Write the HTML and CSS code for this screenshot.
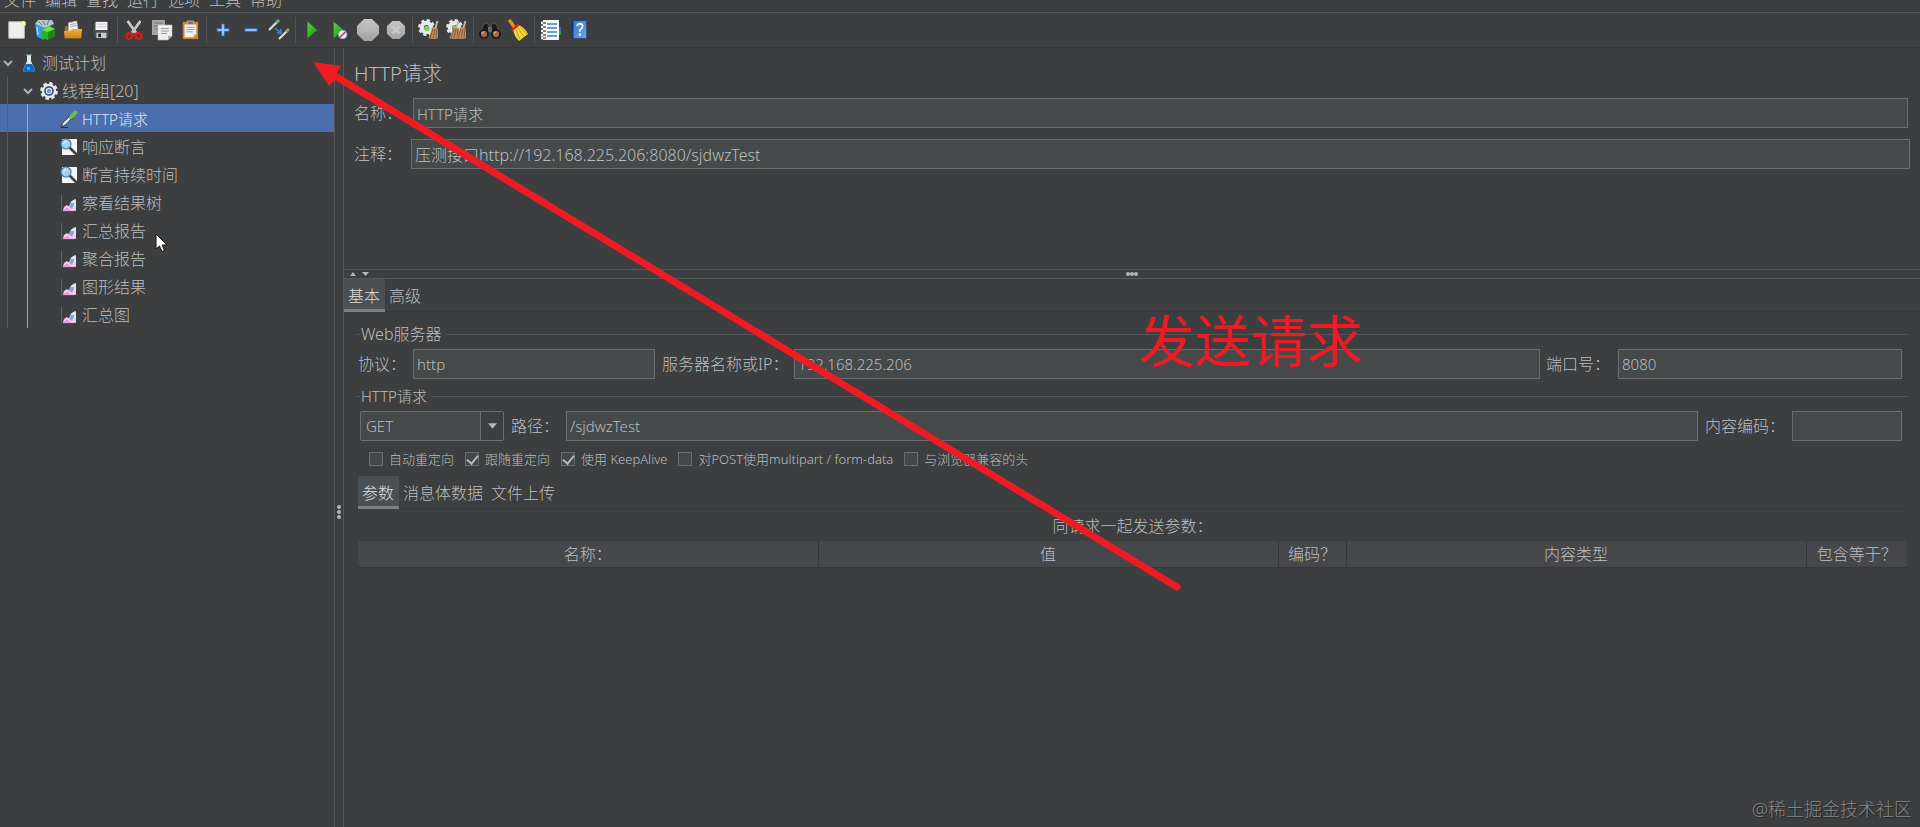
FILE: index.html
```html
<!DOCTYPE html>
<html lang="zh-CN">
<head>
<meta charset="utf-8">
<title>HTTP请求</title>
<link rel="stylesheet" href="styles.css">
</head>
<body>
<svg class="defs" aria-hidden="true">
  <defs>
    <linearGradient id="gGreen" x1="0" y1="0" x2="1" y2="1"><stop offset="0" stop-color="#5fd03f"/><stop offset="1" stop-color="#0c9a0c"/></linearGradient>
    <linearGradient id="gFolder" x1="0" y1="0" x2="0" y2="1"><stop offset="0" stop-color="#f0b040"/><stop offset="1" stop-color="#c98512"/></linearGradient>
    <linearGradient id="gGrey" x1="0" y1="0" x2="0" y2="1"><stop offset="0" stop-color="#c4c4c4"/><stop offset="1" stop-color="#a2a2a2"/></linearGradient>
    <linearGradient id="gBook" x1="0" y1="0" x2="1" y2="1"><stop offset="0" stop-color="#3c78c8"/><stop offset="1" stop-color="#6ea6ee"/></linearGradient>
    <symbol id="gear" viewBox="0 0 16 16">
      <circle cx="8" cy="8" r="6.600" fill="none" stroke="#e6e8ea" stroke-width="2.600" stroke-dasharray="3 2.184"/>
      <circle cx="8" cy="8" r="4.400" fill="none" stroke="#e6e8ea" stroke-width="4"/>
    </symbol>
    <symbol id="pipette" viewBox="0 0 18 18">
      <path d="M1 17 L3 12.500 L10 6 L12 8 L5.500 15Z" fill="#dfe6e8" stroke="#222" stroke-width=".8"/>
      <path d="M9 5.500 L12.700 9" stroke="#173f12" stroke-width="2"/>
      <path d="M11 7 L15.500 2.500" stroke="#6cbb4c" stroke-width="4" stroke-linecap="round"/>
      <path d="M1 17.500h7" stroke="#222" stroke-width=".8"/>
    </symbol>
    <symbol id="assert" viewBox="0 0 18 18">
      <path d="M2 1h15v16h-15z" fill="#f5f5f5"/>
      <path d="M9.500 9.500 L17 17" stroke="#444" stroke-width="2.600"/>
      <circle cx="6" cy="6" r="5" fill="#9fd2f3" stroke="#4d7d9d" stroke-width="1.200"/>
      <path d="M3.500 6a3 3 0 0 1 3-2.500" stroke="#fff" fill="none"/>
    </symbol>
    <symbol id="chart" viewBox="0 0 18 18">
      <path d="M1.500 1v16h14" fill="none" stroke="#606263" stroke-width="1"/>
      <path d="M9 13 Q10 6 16 5 V17 H11Z" fill="#dce4fa"/>
      <path d="M11 9 Q9 12 11 15 Q14 13 14 9Z" fill="#8e9ddb"/>
      <path d="M3 17 Q3 12 7 11 Q10 12 11 15 L16 14 V17Z" fill="#ee9edb"/>
      <path d="M4 15 Q6 12 8 13 L12 16 L16 15" stroke="#fff" fill="none" stroke-width=".9"/>
    </symbol>
    <symbol id="handbroom" viewBox="0 0 12 20">
      <path d="M10.500 1 L8.500 8" stroke="#c8b49a" stroke-width="2"/>
      <path d="M5 7 L11 8.500 L11 18 Q7 20 1 18 Q4 14 5 7Z" fill="#bb8d66"/>
      <path d="M6 9 L3 18M8 9L6 18M10 9L9 18" stroke="#765136" stroke-width=".8"/>
    </symbol>
  </defs>
</svg>

<nav class="menubar">
  <button>文件</button><button>编辑</button><button>查找</button><button>运行</button><button>选项</button><button>工具</button><button>帮助</button>
</nav>

<div class="toolbar" role="toolbar">
  <button aria-label="新建"><svg viewBox="0 0 22 22"><path d="M2 2h17v18h-17z" fill="#eee" stroke="#cfcfc5"/><circle cx="18" cy="4" r="2.800" fill="#f2f07a"/><circle cx="18" cy="4" r="1.200" fill="#fff"/></svg></button>
  <button class="big" aria-label="模板"><svg viewBox="0 0 22 22"><path d="M1 5 L10 8 V21 L3 18Z" fill="#2d9ddf"/><path d="M3 8l1 8" stroke="#9cdcfa" stroke-width="1.500"/><path d="M1 5 L4 1 H18 L20 5 L11 9Z" fill="#b4c9d1"/><path d="M4 2l4 4M9 2l2 4M15 1l-2 5" stroke="#5c7c8a"/><path d="M8 11 L15 7 L21 10 V17 L13 21 L8 18Z" fill="#2db51c"/><path d="M8 11 L14 13 L21 10 L15 7Z" fill="#72df4c"/><path d="M14 13 L21 10 V17 L14 21Z" fill="#168d12"/></svg></button>
  <button aria-label="打开"><svg viewBox="0 0 22 22"><path d="M2 7h5l2 3h11v10H2z" fill="#a96e10"/><path d="M6 3 L15 1 L17 12 H6Z" fill="#f2f2f2" stroke="#aaa" stroke-width=".6"/><path d="M8 5l6-1M8 7l7-1" stroke="#888" stroke-width=".8"/><path d="M1 12H8L10 10H21L20 20H2Z" fill="url(#gFolder)"/></svg></button>
  <button aria-label="保存"><svg viewBox="0 0 22 22"><path d="M2 2H20V20H4L2 18Z" fill="#4b4d51" stroke="#292a2c"/><path d="M5 2h13v9H5z" fill="#fafafa"/><path d="M6 4.500h11M6 7.500h11" stroke="#b9bdc4"/><path d="M6 14h11v6H6z" fill="#c7cbd0"/><path d="M8 15h3v4H8z" fill="#222"/></svg></button>
  <span class="sep"></span>
  <button aria-label="剪切"><svg viewBox="0 0 22 22"><path d="M4 1 L14 15M18 1 L8 15" stroke="#dedede" stroke-width="2.800"/><path d="M5 2 L14 15M17 2 L8 15" stroke="#909090" stroke-width=".7"/><ellipse cx="6" cy="17.500" rx="3.500" ry="3" fill="none" stroke="#e01818" stroke-width="2.600" transform="rotate(-35 6 17.500)"/><ellipse cx="16" cy="17.500" rx="3.500" ry="3" fill="none" stroke="#e01818" stroke-width="2.600" transform="rotate(35 16 17.500)"/></svg></button>
  <button class="big" aria-label="复制"><svg viewBox="0 0 22 22"><path d="M1 1h13v15H1z" fill="#a5a5a5"/><path d="M3 4h9M3 7h9M3 10h6" stroke="#777"/><path d="M7 6h14v11l-4 4H7z" fill="#efefef" stroke="#bbb" stroke-width=".6"/><path d="M10 9.500h8M10 12h8M10 14.500h6" stroke="#999"/><path d="M21 17h-4v4z" fill="#aaa"/></svg></button>
  <button aria-label="粘贴"><svg viewBox="0 0 22 22"><path d="M3 2h17v19H3z" fill="#cb8629"/><path d="M5 5h13v11l-3 3H5z" fill="#f0f0f0"/><path d="M8 1h7v4H8z" fill="#77797c" stroke="#ccc" stroke-width=".7"/><path d="M7 8h9M7 10.500h9M7 13h7" stroke="#999"/><path d="M18 16h-3v3z" fill="#aaa"/></svg></button>
  <span class="sep"></span>
  <button aria-label="全部展开"><svg viewBox="0 0 22 22"><path d="M11 4v14M4 11h14" stroke="#3979d9" stroke-width="3.800"/><path d="M11 5v12M5 11h12" stroke="#a9d2ff" stroke-width="1.800"/></svg></button>
  <button aria-label="全部折叠"><svg viewBox="0 0 22 22"><path d="M4 11h14" stroke="#3979d9" stroke-width="3.800"/><path d="M5 11h12" stroke="#a9d2ff" stroke-width="1.800"/></svg></button>
  <button class="big" aria-label="切换"><svg viewBox="0 0 22 22"><path d="M1 11L9 3M11 20L19 12" stroke="#d9dfd9" stroke-width="2.200"/><path d="M8 4l3-3M18 13l3-3" stroke="#79ad61" stroke-width="3"/><path d="M7 9l6 5M13 10v4H9" stroke="#3989da" stroke-width="1.600" fill="none"/></svg></button>
  <span class="sep"></span>
  <button aria-label="启动"><svg viewBox="0 0 22 22"><path d="M6 2 L17 11 L6 20Z" fill="url(#gGreen)"/></svg></button>
  <button aria-label="不停顿开始"><svg viewBox="0 0 22 22"><path d="M4 2 L15 11 L4 20Z" fill="url(#gGreen)"/><circle cx="14" cy="16" r="4.500" fill="#e9edf6" stroke="#8eaedb"/><path d="M11 19L17 13" stroke="#d63a3a" stroke-width="1.800"/></svg></button>
  <button class="big" aria-label="停止" disabled><svg viewBox="0 0 22 22"><path d="M7 0h8l7 7v8l-7 7H7l-7-7V7z" fill="url(#gGrey)"/><path d="M5 8h3v5H5zM10 8h3v5h-3zM15 13V8h3v3h-3" fill="none" stroke="#bcbcbc"/></svg></button>
  <button aria-label="关闭" disabled><svg viewBox="0 0 22 22"><path d="M7 1h8l6 6v8l-6 6H7l-6-6V7z" fill="url(#gGrey)"/><path d="M7 7l8 8M15 7l-8 8" stroke="#cacaca" stroke-width="2.500"/></svg></button>
  <span class="sep"></span>
  <button class="big" aria-label="清除"><svg viewBox="0 0 22 22"><use href="#gear" x="0" y="0" width="17" height="17"/><circle cx="9" cy="9.500" r="2.800" fill="#7fd25c"/><use href="#handbroom" x="9" y="1" width="12" height="20"/></svg></button>
  <button class="big" aria-label="清除全部"><svg viewBox="0 0 22 22"><use href="#gear" x="0" y="0" width="17" height="17"/><circle cx="8" cy="8" r="2" fill="#7fd25c"/><use href="#handbroom" x="2" y="1" width="12" height="20"/><use href="#handbroom" x="9" y="1" width="12" height="20"/></svg></button>
  <span class="sep"></span>
  <button class="big" aria-label="查找"><svg viewBox="0 0 22 22"><path d="M1 14 L5 5 Q8 3 10 6 V14ZM21 14L17 5Q14 3 12 6V14Z" fill="#1a1a1a" stroke="#666" stroke-width=".7"/><path d="M9 8h4v5H9z" fill="#666"/><circle cx="5" cy="15" r="4" fill="#9d6b4b" stroke="#151515" stroke-width="1.700"/><circle cx="17" cy="15" r="4" fill="#9d6b4b" stroke="#151515" stroke-width="1.700"/><path d="M3 15q0-2 2-2M15 15q0-2 2-2" stroke="#e0b69e" fill="none"/></svg></button>
  <button class="big" aria-label="重置查找"><svg viewBox="0 0 22 22"><path d="M3 2L8 9" stroke="#d99025" stroke-width="3.500" stroke-linecap="round"/><path d="M6 10L12 6Q18 9 21 15L12 22Q7 17 6 10Z" fill="#f5d63c"/><path d="M9 11L13 20M11 9L17 18M13 8L20 15" stroke="#c99b17"/><path d="M5 11L12 5.500" stroke="#d32a1c" stroke-width="2.500"/></svg></button>
  <span class="sep"></span>
  <button class="big" aria-label="函数助手"><svg viewBox="0 0 22 22"><path d="M3 1h16v20H3z" fill="#f6f8fb"/><path d="M7 5h10M7 9h10M7 13h10M7 17h10" stroke="#3f7fc5" stroke-width="1.300"/><path d="M1 4h4M1 8h4M1 12h4M1 16h4M1 19h4" stroke="#f6f8fb" stroke-width="2.400"/><path d="M3 4h3M3 8h3M3 12h3M3 16h3M3 19h3" stroke="#111" stroke-width="1.200"/><path d="M19 8h2v4h-2z" fill="#2a6fd6"/><path d="M19 12h2v4h-2z" fill="#29a829"/></svg></button>
  <button aria-label="帮助"><svg viewBox="0 0 22 22"><path d="M2 2L5 0H19V20H5L2 21Z" fill="#173d75"/><path d="M5 1h14v19H5z" fill="url(#gBook)"/><path d="M9 7q0-3 3-3t3 3q0 2-3 4v2" fill="none" stroke="#fff" stroke-width="1.800"/><circle cx="12" cy="16" r="1.300" fill="#fff"/></svg></button>
</div>

<main class="workspace">
  <aside class="tree">
    <ul role="tree">
      <li class="row root"><svg class="caret" viewBox="0 0 10 8"><path d="M1 2l4 4 4-4"/></svg><svg class="icon" viewBox="0 0 18 18"><path d="M7 1h4v6l4 9q0 2-2 2H5q-2 0-2-2l4-9z" fill="#dce8ef"/><path d="M6 10h6l3 6q0 2-2 2H5q-2 0-2-2z" fill="#1668bd"/><path d="M7 13h3v3H7z" fill="#45a7ed"/><path d="M6 1h6" stroke="#aaa"/></svg><span>测试计划</span></li>
      <li class="row group"><svg class="caret" viewBox="0 0 10 8"><path d="M1 2l4 4 4-4"/></svg><svg class="icon" viewBox="0 0 18 18"><use href="#gear" width="18" height="18"/><circle cx="9" cy="9" r="4" fill="#e9eef6" stroke="#26488d" stroke-width="1.600"/><circle cx="9" cy="9" r="2.200" fill="#7894cf"/></svg><span>线程组[20]</span></li>
      <li class="row leaf selected"><svg class="icon"><use href="#pipette"/></svg><span class="mixed">HTTP请求</span></li>
      <li class="row leaf"><svg class="icon"><use href="#assert"/></svg><span>响应断言</span></li>
      <li class="row leaf"><svg class="icon"><use href="#assert"/></svg><span>断言持续时间</span></li>
      <li class="row leaf"><svg class="icon"><use href="#chart"/></svg><span>察看结果树</span></li>
      <li class="row leaf"><svg class="icon"><use href="#chart"/></svg><span>汇总报告</span></li>
      <li class="row leaf"><svg class="icon"><use href="#chart"/></svg><span>聚合报告</span></li>
      <li class="row leaf"><svg class="icon"><use href="#chart"/></svg><span>图形结果</span></li>
      <li class="row leaf"><svg class="icon"><use href="#chart"/></svg><span>汇总图</span></li>
    </ul>
  </aside>
  <div class="vsplit"><i></i><i></i><i></i></div>

  <section class="editor">
    <div class="head">
      <h1>HTTP请求</h1>
      <div class="field name"><label for="name">名称：</label><input id="name" value="HTTP请求"></div>
      <div class="field note"><label for="note">注释：</label><input id="note" value="压测接口http://192.168.225.206:8080/sjdwzTest"></div>
    </div>
    <div class="hsplit"><svg viewBox="0 0 20 6"><path d="M0 5l3-4 3 4zM12 1h7l-3.500 4z"/></svg><span class="dots"><i></i><i></i><i></i></span></div>
    <div class="tabs"><button class="tab active">基本</button><button class="tab">高级</button></div>

    <div class="panel">
      <fieldset class="group-web">
        <legend>Web服务器</legend>
        <div class="line">
          <label class="l-proto" for="proto">协议：</label><input class="i-proto" id="proto" value="http">
          <label class="l-host" for="host">服务器名称或IP：</label><input class="i-host" id="host" value="192.168.225.206">
          <label class="l-port" for="port">端口号：</label><input class="i-port" id="port" value="8080">
        </div>
      </fieldset>
      <fieldset class="group-http">
        <legend>HTTP请求</legend>
        <div class="line">
          <div class="combo"><select aria-label="方法"><option>GET</option></select><span><svg viewBox="0 0 10 6"><path d="M0 0h10L5 6z"/></svg></span></div>
          <label class="l-path" for="path">路径：</label><input class="i-path" id="path" value="/sjdwzTest">
          <label class="l-enc" for="enc">内容编码：</label><input class="i-enc" id="enc">
        </div>
        <div class="checks">
          <label><input type="checkbox">自动重定向</label>
          <label><input type="checkbox" checked>跟随重定向</label>
          <label><input type="checkbox" checked>使用 KeepAlive</label>
          <label><input type="checkbox">对POST使用multipart / form-data</label>
          <label><input type="checkbox">与浏览器兼容的头</label>
        </div>
        <div class="tabs inner"><button class="tab active">参数</button><button class="tab">消息体数据</button><button class="tab">文件上传</button></div>
        <table>
          <caption>同请求一起发送参数：</caption>
          <colgroup><col><col><col class="c-enc"><col><col class="c-inc"></colgroup>
          <thead><tr><th>名称：</th><th>值</th><th>编码？</th><th>内容类型</th><th>包含等于？</th></tr></thead>
        </table>
      </fieldset>
    </div>
  </section>
</main>

<svg class="arrow" viewBox="0 0 880 540" aria-hidden="true"><path d="M20 14L865 527" stroke="#ed1c24" stroke-width="7" stroke-linecap="round"/><path d="M1 2L29 6L24 14L24 19L17 26Z" fill="#ed1c24"/></svg>
<div class="callout">发送请求</div>
<svg class="cursor" viewBox="0 0 13 20" aria-hidden="true"><path d="M1 1V16L4.500 13L7 18.500L9.500 17.500L7.200 12H12Z" fill="#fff" stroke="#111"/></svg>
<div class="watermark">@稀土掘金技术社区</div>
</body>
</html>
```
FILE: styles.css
```css
* { box-sizing: border-box; }
body {
  margin: 0;
  min-height: 100vh;
  display: flex;
  flex-direction: column;
  position: relative;
  overflow: hidden;
  background: #3c3e3f;
  color: #bbbdbe;
  font: 300 16px/24px "Noto Sans", "Noto Sans CJK SC", sans-serif;
}
button, input, select { font: inherit; color: inherit; margin: 0; }
button { padding: 0; border: 0; background: none; }
.defs { position: absolute; width: 0; height: 0; }

/* The menu bar is scrolled half out of view at the top of the window. */
.menubar {
  display: flex;
  align-items: flex-end;
  gap: 9px;
  height: 13px;
  padding-left: 4px;
  overflow: hidden;
  border-bottom: 1px solid #525455;
}
.menubar button { flex: none; height: 24px; }

.toolbar {
  display: flex;
  align-items: center;
  height: 35px;
  padding-left: 3px;
  border-bottom: 1px solid #323435;
}
.toolbar button { width: 28px; height: 28px; display: grid; place-items: center; }
.toolbar svg { width: 20px; height: 20px; }
.toolbar .big svg { width: 22px; height: 22px; }
.sep { width: 1px; height: 26px; margin: 0 2px; background: #525455; }

.workspace { flex: 1; display: flex; }
.tree { width: 335px; border-right: 1px solid #555758; }
.tree ul { list-style: none; margin: 0; padding: 0; }
.row { display: flex; align-items: center; height: 28px; padding-top: 2px; }
.row .icon { width: 18px; height: 18px; margin-right: 4px; }
.caret { width: 10px; height: 8px; fill: none; stroke: #b0b2b3; stroke-width: 2; }
.root { padding-left: 3px; }
.root .caret { margin-right: 7px; }
.group {
  padding-left: 23px;
  background: linear-gradient(#595b5c, #595b5c) 7px 0 / 1px 100% no-repeat;
}
.group .caret { margin-right: 7px; }
.leaf {
  padding-left: 60px;
  background-image: linear-gradient(#595b5c, #595b5c), linear-gradient(#7fb0dc, #7fb0dc);
  background-size: 1px 100%, 1px 100%;
  background-position: 7px 0, 27px 0;
  background-repeat: no-repeat;
}
.selected { background-color: #4b6eaf; color: #dfe3ea; }
.mixed { font-size: 15px; }

.vsplit {
  display: flex;
  flex-direction: column;
  align-items: center;
  justify-content: center;
  gap: 1px;
  width: 9px;
  padding-top: 148px;
  border-right: 1px solid #555758;
}
.vsplit i, .dots i { width: 4px; height: 4px; border-radius: 2px; background: #b4b6b7; }

.editor { flex: 1; min-width: 0; }
.head { height: 221px; padding: 11px 10px 0; }
h1 { margin: 0 0 9px; font-size: 20px; line-height: 30px; font-weight: 300; }
.field { display: flex; align-items: center; margin-bottom: 11px; }
.field label { width: 57px; }
.field.name { padding-right: 2px; }
.field.name label { width: 59px; }
input:not([type="checkbox"]) {
  height: 30px;
  min-width: 0;
  padding: 0 3px;
  font-size: 15px;
  background: #45494a;
  border: 1px solid #6b6e6f;
  border-radius: 0;
}
.field input { flex: 1; }
.field.note input { font-size: 16px; }

.hsplit {
  display: grid;
  grid-template-columns: 1fr auto 1fr;
  align-items: center;
  height: 10px;
  padding: 0 6px;
  border-top: 1px solid #555758;
  border-bottom: 1px solid #555758;
}
.hsplit svg { width: 20px; height: 6px; fill: #b4b6b7; }
.dots { display: flex; }

.tabs { display: flex; height: 33px; border-bottom: 1px solid #353738; }
.tab { height: 33px; padding: 0 4px; }
.tab.active { padding: 3px 5px 0 4px; background: #4a5051; color: #dcdedf; border-bottom: 3px solid #7b8182; }

.panel { padding: 10px 12px 0; }
fieldset { min-width: 0; margin: 0; padding: 0; border: 0; }
legend { display: flex; align-items: center; gap: 4px; width: 100%; padding: 0; font-size: 15px; line-height: 24px; }
.group-web legend { font-size: 16px; }
legend::before, legend::after { content: ""; height: 1px; background: #525455; }
legend::before { width: 4px; margin-right: -3px; }
legend::after { flex: 1; }
.line { display: flex; align-items: center; padding: 3px 6px 0 2px; }
.line label { flex: none; white-space: nowrap; }
.group-http { margin-top: 5px; }
.l-proto { width: 55px; }
.i-proto { flex: 242 1 242px; }
.l-host { width: 139px; padding-left: 7px; }
.i-host { flex: 746 1 746px; }
.l-port { width: 78px; padding-left: 6px; }
.i-port { flex: 284 1 284px; }
.combo { position: relative; width: 144px; margin-left: 2px; }
.combo select {
  display: block;
  width: 100%;
  height: 30px;
  padding: 0 5px;
  appearance: none;
  font-size: 15px;
  background: #45494a;
  border: 1px solid #6b6e6f;
  border-radius: 2px;
}
.combo span {
  position: absolute;
  top: 1px;
  right: 1px;
  bottom: 1px;
  width: 23px;
  display: grid;
  place-items: center;
  background: #3c3e3f;
  border-left: 1px solid #6b6e6f;
  pointer-events: none;
}
.combo svg { width: 9px; height: 6px; fill: #b4b6b7; }
.l-path { width: 62px; padding-left: 7px; }
.i-path { flex: 1; }
.l-enc { width: 94px; padding-left: 7px; }
.i-enc { width: 110px; }

.checks { display: flex; gap: 11px; height: 35px; align-items: center; padding-left: 13px; font-size: 13px; }
.checks label { display: flex; align-items: center; gap: 6px; white-space: nowrap; }
.checks input {
  appearance: none;
  display: grid;
  place-items: center;
  width: 14px;
  height: 14px;
  background: #43494a;
  border: 1px solid #6b6e6f;
}
.checks input:checked::after {
  content: "";
  width: 5px;
  height: 9px;
  margin-bottom: 2px;
  border: solid #b8babb;
  border-width: 0 2px 2px 0;
  transform: rotate(40deg);
}
.inner { margin: 0 3px 0 2px; }
table { width: calc(100% - 3px); margin-left: 2px; border-collapse: collapse; table-layout: fixed; }
caption { padding: 5px 0 3px; line-height: 24px; }
th { height: 26px; padding: 0; font-weight: 300; line-height: 24px; background: #45474a; border-bottom: 1px solid #353738; }
th + th { border-left: 1px solid #353738; }
.c-enc { width: 68px; }
.c-inc { width: 101px; }

.arrow { position: absolute; left: 312px; top: 60px; width: 880px; height: 540px; pointer-events: none; }
.callout { position: absolute; left: 1139px; top: 300px; color: #ed1c24; font-size: 56px; font-weight: 400; line-height: 80px; pointer-events: none; }
.cursor { position: absolute; left: 155px; top: 233px; width: 13px; height: 20px; }
.watermark { position: absolute; right: 8px; bottom: 6px; color: #858789; font-size: 18px; line-height: 24px; text-shadow: 1px 1px 1px #222; }
```
